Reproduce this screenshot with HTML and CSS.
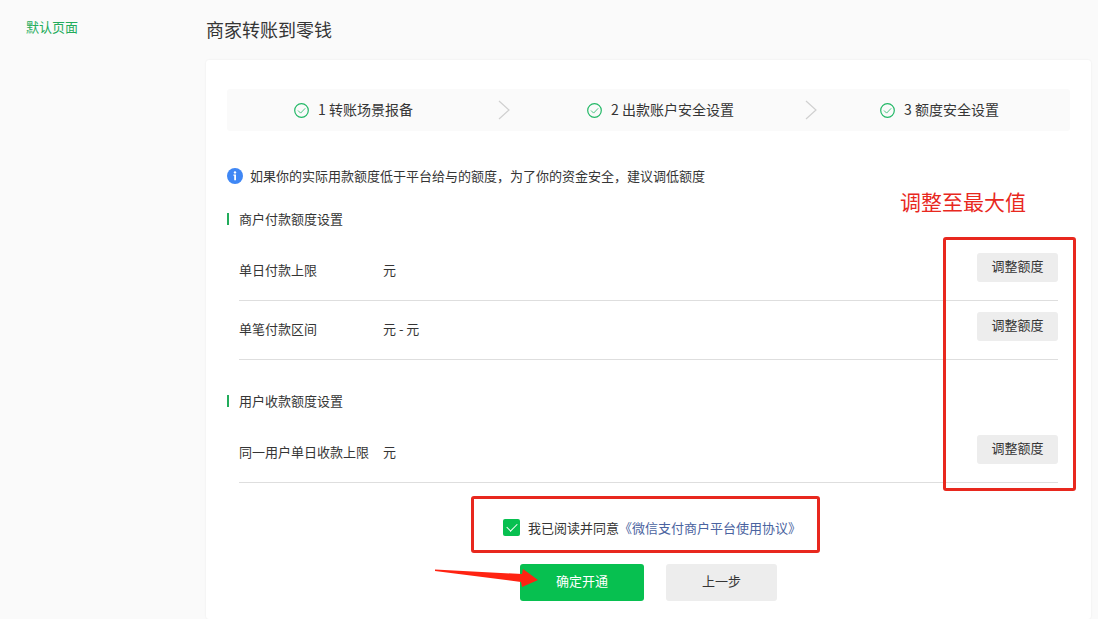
FILE: index.html
```html
<!DOCTYPE html>
<html lang="zh-CN">
<head>
  <meta charset="UTF-8" />
  <meta name="viewport" content="width=device-width, initial-scale=1.0">
  <title>商家转账到零钱</title>
  <link rel="stylesheet" href="styles.css">
</head>
<body>
  <nav class="sidebar">
    <a href="#">默认页面</a>
  </nav>

  <main class="main">
    <h1>商家转账到零钱</h1>

    <div class="card">
      <ol class="steps">
        <li>
          <svg class="done" viewBox="0 0 15 15"><circle cx="7.5" cy="7.5" r="6.8"/><path d="M4 7.5l2.6 2.6 4.6-4.8"/></svg>
          <span>1 转账场景报备</span>
          <svg class="arrow" viewBox="0 0 12 20"><path d="M1 1l10 9-10 9"/></svg>
        </li>
        <li>
          <svg class="done" viewBox="0 0 15 15"><circle cx="7.5" cy="7.5" r="6.8"/><path d="M4 7.5l2.6 2.6 4.6-4.8"/></svg>
          <span>2 出款账户安全设置</span>
          <svg class="arrow" viewBox="0 0 12 20"><path d="M1 1l10 9-10 9"/></svg>
        </li>
        <li>
          <svg class="done" viewBox="0 0 15 15"><circle cx="7.5" cy="7.5" r="6.8"/><path d="M4 7.5l2.6 2.6 4.6-4.8"/></svg>
          <span>3 额度安全设置</span>
        </li>
      </ol>

      <p class="notice">
        <svg viewBox="0 0 16 16"><circle cx="8" cy="8" r="8" fill="#3f87f5"/><circle cx="8" cy="4.4" r="1.2" fill="#fff"/><path d="M6.4 6.6H9v5.6H7.2V7.8h-.8z" fill="#fff"/></svg>
        如果你的实际用款额度低于平台给与的额度，为了你的资金安全，建议调低额度
      </p>

      <section>
        <h2>商户付款额度设置</h2>
        <table class="limits">
          <tr>
            <th scope="row">单日付款上限</th>
            <td>元</td>
            <td class="action"><button type="button" class="btn-small">调整额度</button></td>
          </tr>
          <tr>
            <th scope="row">单笔付款区间</th>
            <td>元 - 元</td>
            <td class="action"><button type="button" class="btn-small">调整额度</button></td>
          </tr>
        </table>
      </section>

      <section>
        <h2>用户收款额度设置</h2>
        <table class="limits">
          <tr>
            <th scope="row">同一用户单日收款上限</th>
            <td>元</td>
            <td class="action"><button type="button" class="btn-small">调整额度</button></td>
          </tr>
        </table>
      </section>

      <div class="agreement-row">
        <div class="agreement">
          <input type="checkbox" id="agree" checked>
          <label for="agree">我已阅读并同意</label><a href="#">《微信支付商户平台使用协议》</a>
        </div>
      </div>

      <div class="buttons">
        <button type="submit" class="btn btn-primary">确定开通</button>
        <button type="button" class="btn">上一步</button>
        <svg class="pointer" viewBox="0 0 106 24"><path d="M1 5.5L88 10 89 5l15 11-16 7-1-5L1 7z"/></svg>
      </div>

      <!-- guide marks over the limits -->
      <span class="mark-text">调整至最大值</span>
      <div class="mark-box"></div>
    </div>
  </main>
</body>
</html>
```
FILE: styles.css
```css
* {
  margin: 0;
  padding: 0;
  box-sizing: border-box;
}
body {
  font-family: "Noto Sans CJK SC", sans-serif;
  font-size: 13px;
  line-height: 20px;
  color: #353535;
  background: #fafafa;
  min-height: 100vh;
  display: flex;
}
a {
  text-decoration: none;
}
button {
  font: inherit;
  color: inherit;
  border: none;
  border-radius: 3px;
  background: #ededed;
  cursor: pointer;
}
.sidebar {
  width: 206px;
  padding: 17px 26px;
}
.sidebar a {
  color: #22ac5b;
}
.main {
  flex: 1;
  display: flex;
  flex-direction: column;
  padding-right: 7px;
}
.main h1 {
  font-size: 18px;
  font-weight: 400;
  line-height: 28px;
  padding: 15px 0 17px;
}
.card {
  position: relative;
  flex: 1;
  background: #fff;
  border-radius: 3px;
  box-shadow: 0 0 2px rgba(0, 0, 0, 0.08);
  padding: 29px 21px 18px;
}

/* steps */
.steps {
  list-style: none;
  display: grid;
  grid-template-columns: 293fr 293fr 190fr;
  padding-left: 67px;
  background: #fafafa;
  border-radius: 3px;
  font-size: 14px;
}
.steps li {
  display: flex;
  align-items: center;
  height: 42px;
}
.steps span {
  padding: 0 8px 2px 0;
}
.steps svg {
  fill: none;
}
.done {
  width: 15px;
  height: 15px;
  margin-right: 9px;
  stroke: #22b866;
  stroke-width: 1.2;
}
.done path {
  stroke-width: 0.8;
}
.arrow {
  width: 12px;
  height: 20px;
  margin: 0 auto;
  stroke: #d0d0d0;
  stroke-width: 1.2;
}

.notice {
  display: flex;
  align-items: center;
  gap: 7px;
  margin-top: 35px;
}
.notice svg {
  width: 16px;
  height: 16px;
}

/* limits */
section {
  padding-right: 12px;
}
section h2 {
  display: flex;
  align-items: center;
  gap: 10px;
  margin: 23px 0 13px;
  font-size: 13px;
  font-weight: 400;
}
section + section h2 {
  margin-top: 31px;
}
section h2::before {
  content: "";
  width: 2px;
  height: 12px;
  background: #22ac5b;
}
.limits {
  width: calc(100% - 12px);
  margin-left: 12px;
  border-collapse: separate;
  border-spacing: 0;
}
.limits th,
.limits td {
  height: 59px;
  padding-bottom: 3px;
  border-bottom: 1px solid #dedede;
  text-align: left;
  font-weight: 400;
}
.limits th {
  width: 144px;
}
.limits .action {
  padding-top: 11px;
  text-align: right;
  vertical-align: top;
}
.btn-small {
  width: 81px;
  height: 29px;
  padding-bottom: 4px;
}

/* agreement */
.agreement-row {
  display: flex;
  justify-content: center;
  margin-top: 13px;
  padding-right: 6px;
}
.agreement {
  display: flex;
  align-items: center;
  width: 349px;
  height: 57px;
  padding: 6px 0 0 29px;
  border: 3px solid #e8281e;
  border-radius: 3px;
}
.agreement input {
  appearance: none;
  display: flex;
  align-items: center;
  justify-content: center;
  width: 17px;
  height: 17px;
  margin-right: 8px;
  border-radius: 2px;
  background: #07c050;
}
.agreement input:checked::before {
  content: "";
  width: 9px;
  height: 5px;
  margin-bottom: 3px;
  border: solid #fff;
  border-width: 0 0 1px 1px;
  transform: rotate(-45deg);
}
.agreement a {
  color: #4a63a0;
}
.buttons {
  position: relative;
  display: flex;
  justify-content: center;
  gap: 22px;
  width: 257px;
  margin: 11px auto 0;
}
.btn {
  width: 111px;
  height: 37px;
  padding-bottom: 4px;
}
.btn-primary {
  width: 124px;
  color: #fff;
  background: #07c050;
}

/* guide marks */
.pointer {
  position: absolute;
  left: -86px;
  top: 0;
  width: 106px;
  height: 24px;
  fill: #ff2312;
}
.mark-text {
  position: absolute;
  top: 126px;
  right: 65px;
  font-size: 21px;
  line-height: 30px;
  color: #e8281e;
}
.mark-box {
  position: absolute;
  top: 177px;
  right: 15px;
  width: 133px;
  height: 254px;
  border: 3px solid #e8281e;
  border-radius: 3px;
}
```
